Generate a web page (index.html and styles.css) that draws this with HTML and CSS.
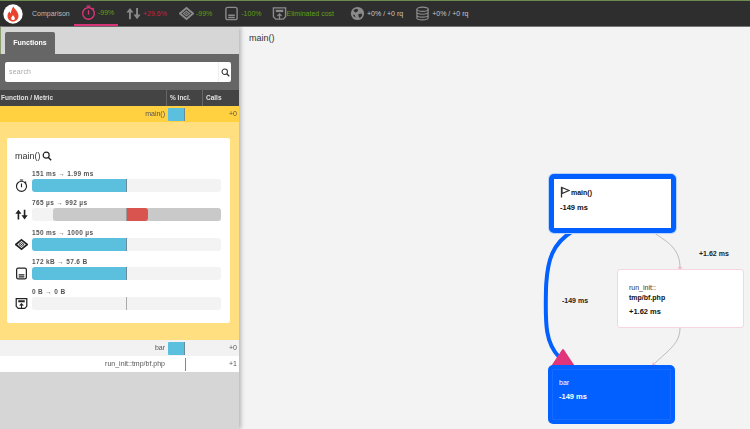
FILE: index.html
```html
<!DOCTYPE html>
<html lang="en">
<head>
    <meta charset="UTF-8">
    <title>Comparison</title>
    <link rel="stylesheet" href="styles.css">
</head>
<body>
    <svg class="icon-defs" width="0" height="0">
        <symbol id="i-timer" viewBox="0 0 16 16">
            <circle cx="8" cy="9" r="6.200" fill="none" stroke="currentColor" stroke-width="1.400"/>
            <path d="M8 5.500v4.500M6 1.200h4M12.400 3.200l1.300 1.300" fill="none" stroke="currentColor" stroke-width="1.400"/>
        </symbol>
        <symbol id="i-arrows" viewBox="0 0 16 16">
            <path d="M4.200 14V6M11.800 2v8" fill="none" stroke="currentColor" stroke-width="2"/>
            <path d="M4.200 2L8 7H.4zM11.800 14L8 9h7.600z" fill="currentColor"/>
        </symbol>
        <symbol id="i-chip" viewBox="0 0 16 16">
            <path d="M8 2.200L15 8l-7 5.800L1 8z" fill="none" stroke="currentColor" stroke-width="2"/>
            <path d="M8 5.500L11.200 8 8 10.500 4.800 8z" fill="none" stroke="currentColor" stroke-width="1.200"/>
            <circle cx="8" cy="8" r="1" fill="currentColor"/>
        </symbol>
        <symbol id="i-memory" viewBox="0 0 16 16">
            <rect x="2" y="1.500" width="12" height="13" rx="2" fill="none" stroke="currentColor" stroke-width="1.500"/>
            <path d="M4.500 9.800h7M4.500 12.200h7" stroke="currentColor" stroke-width="1.500"/>
        </symbol>
        <symbol id="i-network" viewBox="0 0 16 16">
            <path d="M1.500 2h13v9.500l-2.500 2.500H4l-2.500-2.500z" fill="none" stroke="currentColor" stroke-width="1.500"/>
            <path d="M4 4h8v2.500H4z" fill="currentColor"/>
            <path d="M8 14.500V8.500M5.800 10.700L8 8.300l2.200 2.400" fill="none" stroke="currentColor" stroke-width="1.300"/>
        </symbol>
        <symbol id="i-globe" viewBox="0 0 16 16">
            <circle cx="8" cy="8" r="7" fill="currentColor"/>
            <path d="M3.500 4.500l3-1.500 2.500 1-1.500 2.500-2 .5zM9 8.500l3.500-.5.500 2.500-2.500 2.500L9 11zM3 9l2 .5 1 3-2-1.500z" fill="#2e2e2e"/>
        </symbol>
        <symbol id="i-db" viewBox="0 0 16 16">
            <ellipse cx="8" cy="3.500" rx="6" ry="2.300" fill="none" stroke="currentColor" stroke-width="1.300"/>
            <path d="M2 3.500v9c0 1.300 2.700 2.300 6 2.300s6-1 6-2.300v-9M2 6.500c0 1.300 2.700 2.300 6 2.300s6-1 6-2.300M2 9.500c0 1.300 2.700 2.300 6 2.300s6-1 6-2.300" fill="none" stroke="currentColor" stroke-width="1.300"/>
        </symbol>
        <symbol id="i-search" viewBox="0 0 12 12">
            <circle cx="5" cy="5" r="3.600" fill="none" stroke="currentColor" stroke-width="1.400"/>
            <path d="M7.700 7.700L11 11" stroke="currentColor" stroke-width="1.700"/>
        </symbol>
    </svg>

    <!-- Top bar -->
    <header class="topbar">
        <div class="logo">
            <svg viewBox="0 0 20 20" width="20" height="20">
                <circle cx="10" cy="10" r="9.700" fill="#fff"/>
                <path d="M10.500 2.500c.6 2.500 5 4.800 5 9.500 0 3-2.400 5.500-5.500 5.500S4.500 15 4.500 12c0-2 1-3.500 2.200-4.700.1 1.100.5 1.800 1.200 2.200C8 7.200 8.800 4.500 10.500 2.500zM10 11c-.3 1-1.800 1.800-1.800 3.400 0 1 .8 1.700 1.800 1.700s1.800-.7 1.800-1.700c0-1.600-1.500-2.400-1.800-3.400z" fill="#e8432e" fill-rule="evenodd"/>
            </svg>
        </div>
        <span class="page-name">Comparison</span>
        <div class="metric metric-active">
            <svg class="metric-icon"><use href="#i-timer"/></svg>
            <span class="good">-99%</span>
        </div>
        <div class="metric">
            <svg class="metric-icon"><use href="#i-arrows"/></svg>
            <span class="bad">+29.6%</span>
        </div>
        <div class="metric">
            <svg class="metric-icon"><use href="#i-chip"/></svg>
            <span class="good">-99%</span>
        </div>
        <div class="metric">
            <svg class="metric-icon"><use href="#i-memory"/></svg>
            <span class="good">-100%</span>
        </div>
        <div class="metric metric-wide">
            <svg class="metric-icon"><use href="#i-network"/></svg>
            <span class="good">Eliminated cost</span>
        </div>
        <div class="metric">
            <svg class="metric-icon"><use href="#i-globe"/></svg>
            <span>+0% / +0 rq</span>
        </div>
        <div class="metric">
            <svg class="metric-icon"><use href="#i-db"/></svg>
            <span>+0% / +0 rq</span>
        </div>
    </header>

    <div class="content">
        <!-- Functions panel -->
        <aside class="sidebar">
            <div class="tabs">
                <div class="tab">Functions</div>
            </div>
            <div class="search-box">
                <div class="search">
                    <span class="search-text">search</span>
                    <span class="search-btn"><svg class="search-icon"><use href="#i-search"/></svg></span>
                </div>
            </div>
            <div class="table-head">
                <div class="col-name">Function / Metric</div>
                <div class="col-incl">% Incl.</div>
                <div class="col-calls">Calls</div>
            </div>
            <div class="row row-selected">
                <div class="col-name">main()</div>
                <div class="col-incl"><span class="mini-bar"></span></div>
                <div class="col-calls">+0</div>
            </div>
            <div class="details">
                <div class="card">
                    <div class="card-title">main() <svg class="title-search"><use href="#i-search"/></svg></div>

                    <div class="stat">
                        <svg class="stat-icon"><use href="#i-timer"/></svg>
                        <div class="stat-body">
                            <div class="stat-label">151 ms → 1.99 ms</div>
                            <div class="track"><span class="fill fill-full"></span></div>
                        </div>
                    </div>
                    <div class="stat">
                        <svg class="stat-icon"><use href="#i-arrows"/></svg>
                        <div class="stat-body">
                            <div class="stat-label">765 µs → 992 µs</div>
                            <div class="track">
                                <span class="fill-grey"></span>
                                <span class="fill-red"></span>
                            </div>
                        </div>
                    </div>
                    <div class="stat">
                        <svg class="stat-icon"><use href="#i-chip"/></svg>
                        <div class="stat-body">
                            <div class="stat-label">150 ms → 1000 µs</div>
                            <div class="track"><span class="fill fill-full"></span></div>
                        </div>
                    </div>
                    <div class="stat">
                        <svg class="stat-icon"><use href="#i-memory"/></svg>
                        <div class="stat-body">
                            <div class="stat-label">172 kB → 57.6 B</div>
                            <div class="track"><span class="fill fill-full"></span></div>
                        </div>
                    </div>
                    <div class="stat">
                        <svg class="stat-icon"><use href="#i-network"/></svg>
                        <div class="stat-body">
                            <div class="stat-label">0 B → 0 B</div>
                            <div class="track"><span class="mid-line"></span></div>
                        </div>
                    </div>
                </div>
            </div>
            <div class="row row-alt">
                <div class="col-name">bar</div>
                <div class="col-incl"><span class="mini-bar"></span></div>
                <div class="col-calls">+0</div>
            </div>
            <div class="row row-white">
                <div class="col-name">run_init::tmp/bf.php</div>
                <div class="col-incl"><span class="mini-line"></span></div>
                <div class="col-calls">+1</div>
            </div>
        </aside>

        <!-- Call graph -->
        <main class="graph">
            <h2 class="graph-title">main()</h2>

            <svg class="edges" width="511" height="402" viewBox="0 0 511 402">
                <path d="M334 204C314 216 308 232 307 262C306 300 307 316 320 330" fill="none" stroke="#0060ff" stroke-width="4"/>
                <path d="M414 205C430 216 441 222 441 241" fill="none" stroke="#bbb"/>
                <path d="M441 301C441 316 430 323 416 336" fill="none" stroke="#bbb"/>
                <path d="M438.500 240h5l-2.500 3z" fill="#f2b8c8"/>
                <path d="M414 335l3 3h-4z" fill="#f2b8c8"/>
                <path d="M324 323L334 338H314z" fill="#e0357b" stroke="#e0357b" stroke-width="2" stroke-linejoin="round"/>
            </svg>

            <div class="edge-label edge-a">+1.62 ms</div>
            <div class="edge-label edge-b">-149 ms</div>

            <div class="node node-main">
                <div class="node-name">
                    <svg class="flag" viewBox="0 0 10 12" width="10" height="12">
                        <path d="M1.500 1v10.500M2 1.500L9 4.500 2 7.500z" fill="none" stroke="#333" stroke-width="1.300"/>
                    </svg>
                    main()
                </div>
                <div class="node-cost">-149 ms</div>
            </div>
            <div class="node node-init">
                <div class="node-prefix">run_init::</div>
                <div class="node-file">tmp/bf.php</div>
                <div class="node-cost">+1.62 ms</div>
            </div>
            <div class="node node-bar">
                <div class="node-bar-name">bar</div>
                <div class="node-cost">-149 ms</div>
            </div>
        </main>
    </div>
</body>
</html>
```

FILE: styles.css
```css
:root {
    --bar-bg: #2e2e2e;
    --good: #5fa012;
    --bad: #c4233f;
    --pink: #e0357b;
    --blue: #5bc0de;
    --node-blue: #0060ff;
}

* {
    box-sizing: border-box;
}

html, body {
    height: 100%;
}

body {
    margin: 0;
    display: flex;
    flex-direction: column;
    overflow: hidden;
    font-family: "Liberation Sans", Arial, sans-serif;
    font-size: 7px;
    color: #333;
    background-color: #f3f3f3;
}

.icon-defs {
    position: absolute;
}

/* Top bar */
.topbar {
    display: flex;
    align-items: stretch;
    height: 27px;
    flex-shrink: 0;
    padding-left: 3px;
    background-color: var(--bar-bg);
    border-top: 1px solid #6d8a50;
    border-bottom: 1px solid #777;
    color: #c8c8c8;
    font-size: 7px;
    opacity: 0.999;
}

.logo {
    display: flex;
    align-items: center;
    width: 29px;
}

.page-name {
    align-self: center;
    width: 42px;
    margin-bottom: 1px;
    color: #bbb;
}

.metric {
    display: flex;
    align-items: center;
    gap: 2px;
    height: 25px;
    padding: 0 6px;
}

.metric-active {
    width: 44px;
    margin-right: 2px;
    padding-left: 7px;
    border-bottom: 2px solid var(--pink);
}

.metric-wide {
    gap: 0;
    margin-left: -2px;
    margin-right: 4px;
}

.metric-icon {
    width: 15px;
    height: 15px;
    flex-shrink: 0;
    color: #8a8a8a;
}

.metric-active .metric-icon {
    color: var(--pink);
}

.good {
    color: var(--good);
}

.bad {
    color: var(--bad);
}

.content {
    display: flex;
    flex: 1;
    min-height: 0;
    opacity: 0.999;
}

/* Functions panel */
.sidebar {
    width: 239px;
    flex-shrink: 0;
    background-color: #d6d6d6;
    box-shadow: 2px 0 4px rgba(0, 0, 0, 0.25);
    z-index: 1;
}

.tabs {
    height: 27px;
    padding: 5px 0 0 4px;
    border-left: 1px solid #8aa070;
}

.tab {
    width: 50px;
    height: 22px;
    line-height: 21px;
    text-align: center;
    font-size: 7px;
    font-weight: bold;
    color: #fff;
    background-color: #666;
    border-radius: 2px 2px 0 0;
}

.search-box {
    height: 36px;
    padding: 8px 8px 0 5px;
    background-color: #666;
}

.search {
    display: flex;
    justify-content: space-between;
    height: 20px;
    background-color: #fff;
    border-radius: 2px;
}

.search-text {
    padding-left: 4px;
    line-height: 20px;
    color: #aaa;
    letter-spacing: 0.2px;
}

.search-btn {
    display: flex;
    align-items: center;
    justify-content: center;
    width: 13px;
    border-left: 1px solid #eee;
}

.search-icon {
    width: 9px;
    height: 9px;
    color: #333;
}

.table-head {
    display: flex;
    height: 16px;
    line-height: 16px;
    font-size: 6.5px;
    font-weight: bold;
    color: #e0e0e0;
    background-color: #444;
}

.table-head .col-name {
    text-align: left;
    padding: 0 0 0 1px;
}

.table-head .col-incl,
.table-head .col-calls {
    padding-left: 3px;
    border-left: 1px solid #666;
    text-align: left;
}

.col-name {
    width: 166px;
    padding-right: 1px;
    text-align: right;
}

.col-incl {
    display: flex;
    align-items: center;
    width: 36px;
    padding-left: 2px;
}

.col-calls {
    width: 37px;
    padding-right: 2px;
    text-align: right;
}

.row {
    display: flex;
    height: 16px;
    line-height: 15px;
    color: #555;
}

.row-selected {
    background-color: #ffd040;
}

.row-alt {
    background-color: #f2f2f2;
}

.row-white {
    background-color: #fff;
}

.mini-bar {
    display: block;
    width: 17px;
    height: 13px;
    background-color: var(--blue);
    border-right: 1px solid #6d8a9a;
    border-radius: 1px 0 0 1px;
}

.mini-line {
    display: block;
    width: 1px;
    height: 13px;
    margin-left: 17px;
    background-color: #888;
}

.details {
    height: 218px;
    padding: 16px 9px 17px 7px;
    background-color: #ffdf80;
}

.card {
    height: 185px;
    padding: 11px 9px 0 8px;
    background-color: #fff;
    border-radius: 2px;
}

.card-title {
    display: flex;
    align-items: center;
    gap: 1px;
    height: 13px;
    font-size: 9px;
    color: #333;
}

.title-search {
    width: 10px;
    height: 10px;
    color: #222;
}

.stat {
    display: flex;
    align-items: flex-end;
    gap: 4px;
    height: 29.6px;
}

.stat-icon {
    width: 13px;
    height: 13px;
    flex-shrink: 0;
    color: #222;
}

.stat-body {
    flex: 1;
}

.stat-label {
    height: 8px;
    margin-bottom: 1px;
    line-height: 8px;
    font-weight: bold;
    font-size: 6.5px;
    letter-spacing: 0.35px;
    color: #555;
}

.track {
    position: relative;
    height: 13px;
    background-color: #f3f3f3;
    border-radius: 3px;
}

.fill {
    display: block;
    height: 100%;
    background-color: var(--blue);
    border-right: 1px solid #6d8a9a;
    border-radius: 3px 0 0 3px;
}

.fill-full {
    width: 50%;
}

.fill-grey {
    position: absolute;
    left: 21px;
    right: 0;
    top: 0;
    bottom: 0;
    background-color: #c9c9c9;
    border-radius: 3px;
}

.fill-red {
    position: absolute;
    left: 94px;
    top: 0;
    bottom: 0;
    width: 22px;
    background-color: #d9534f;
    border-left: 1px solid #999;
    border-radius: 0 3px 3px 0;
}

.mid-line {
    position: absolute;
    left: 94px;
    top: 0;
    bottom: 0;
    width: 1px;
    background-color: #aaa;
}

/* Call graph */
.graph {
    position: relative;
    flex: 1;
    background-color: #f3f3f3;
}

.graph-title {
    margin: 0;
    padding: 6px 0 0 10px;
    font-size: 9px;
    font-weight: normal;
    color: #333;
}

.edges {
    position: absolute;
    left: 0;
    top: 0;
}

.edge-label {
    position: absolute;
    font-weight: bold;
    color: #222;
    font-size: 7px;
}

.edge-a {
    left: 460px;
    top: 223px;
}

.edge-b {
    left: 323px;
    top: 270px;
}

.node {
    position: absolute;
    width: 127px;
    height: 59px;
    border-radius: 5px;
    color: #111;
}

.node-main {
    left: 310px;
    top: 147px;
    padding: 7px 0 0 6px;
    background-color: #fff;
    border: 5px solid var(--node-blue);
    box-shadow: 0 0 0 1px #b9d2f8;
}

.node-name {
    display: flex;
    align-items: center;
    gap: 1px;
    height: 12px;
    font-weight: bold;
    font-size: 7px;
}

.node-cost {
    margin-top: 5px;
    font-weight: bold;
    font-size: 7.5px;
}

.node-init {
    left: 378px;
    top: 242px;
    padding: 13px 0 0 11px;
    background-color: #fff;
    border: 1px solid #f6d5df;
    border-radius: 3px;
    font-size: 7px;
}

.node-prefix {
    color: #333;
    line-height: 10px;
}

.node-file {
    font-weight: bold;
    line-height: 9px;
}

.node-bar {
    left: 309px;
    top: 338px;
    padding: 13px 0 0 11px;
    background-color: var(--node-blue);
    outline: 1px solid #1869ff;
    outline-offset: -5px;
    color: #fff;
    font-size: 7px;
}

.node-bar-name {
    line-height: 9px;
}
```
